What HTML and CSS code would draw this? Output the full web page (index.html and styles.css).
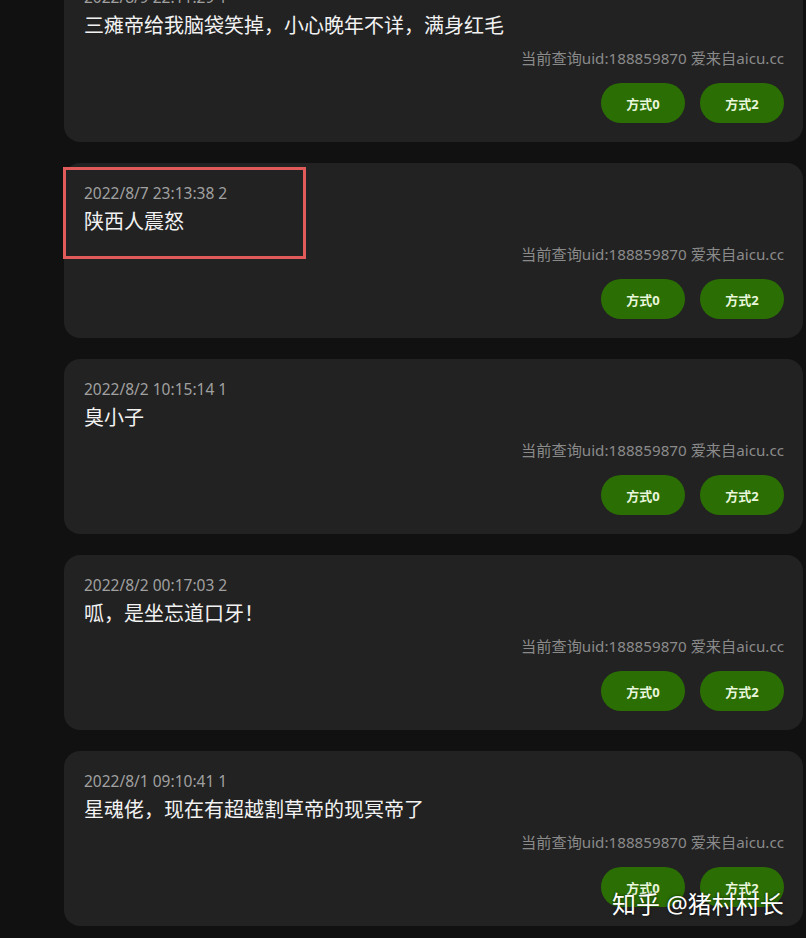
FILE: index.html
```html
<!DOCTYPE html>
<html lang="zh-CN">
<head>
    <meta charset="UTF-8">
    <meta name="viewport" content="width=device-width, initial-scale=1.0">
    <title>评论记录</title>
    <link rel="stylesheet" href="styles.css">
</head>
<body>
    <div class="list">
        <div class="card">
            <div class="date">2022/8/9 22:11:29 1</div>
            <div class="content">三瘫帝给我脑袋笑掉，小心晚年不详，满身红毛</div>
            <div class="uid">当前查询uid:188859870 爱来自aicu.cc</div>
            <div class="actions">
                <button class="btn">方式0</button>
                <button class="btn">方式2</button>
            </div>
        </div>
        <div class="card">
            <div class="mark"></div>
            <div class="date">2022/8/7 23:13:38 2</div>
            <div class="content">陕西人震怒</div>
            <div class="uid">当前查询uid:188859870 爱来自aicu.cc</div>
            <div class="actions">
                <button class="btn">方式0</button>
                <button class="btn">方式2</button>
            </div>
        </div>
        <div class="card">
            <div class="date">2022/8/2 10:15:14 1</div>
            <div class="content">臭小子</div>
            <div class="uid">当前查询uid:188859870 爱来自aicu.cc</div>
            <div class="actions">
                <button class="btn">方式0</button>
                <button class="btn">方式2</button>
            </div>
        </div>
        <div class="card">
            <div class="date">2022/8/2 00:17:03 2</div>
            <div class="content">呱，是坐忘道口牙！</div>
            <div class="uid">当前查询uid:188859870 爱来自aicu.cc</div>
            <div class="actions">
                <button class="btn">方式0</button>
                <button class="btn">方式2</button>
            </div>
        </div>
        <div class="card">
            <div class="date">2022/8/1 09:10:41 1</div>
            <div class="content">星魂佬，现在有超越割草帝的现冥帝了</div>
            <div class="uid">当前查询uid:188859870 爱来自aicu.cc</div>
            <div class="actions">
                <button class="btn">方式0</button>
                <button class="btn">方式2</button>
            </div>
        </div>
    </div>
    <div class="watermark">知乎 @猪村村长</div>
</body>
</html>
```

FILE: styles.css
```css
body {
    margin: 0;
    background-color: #111111;
    font-family: "Noto Sans", "Noto Sans CJK SC", sans-serif;
    height: 938px;
    overflow: hidden;
    position: relative;
}
.list {
    display: flex;
    flex-direction: column;
    gap: 21px;
    padding: 0 3px 0 64px;
    margin-top: -33px;
}
.card {
    position: relative;
    background: #222222;
    border-radius: 16px;
    padding: 20px 19px 20px 20px;
    height: 135px;
}
.date {
    font-size: 15.5px;
    line-height: 20px;
    color: #a0a0a0;
}
.content {
    font-size: 20px;
    line-height: 28px;
    color: #f2f2f2;
    margin-top: 5px;
}
.uid {
    font-size: 15.2px;
    line-height: 20px;
    color: #8a8a8a;
    text-align: right;
    margin-top: 8px;
}
.actions {
    display: flex;
    justify-content: flex-end;
    gap: 15px;
    margin-top: 15px;
}
.btn {
    width: 84px;
    height: 40px;
    border: none;
    border-radius: 20px;
    background: #2b6e03;
    color: #e8f6dc;
    font-family: "Noto Sans", "Noto Sans CJK SC", sans-serif;
    font-size: 13px;
    font-weight: bold;
    cursor: pointer;
}
.mark {
    position: absolute;
    left: -1px;
    top: 4px;
    width: 237px;
    height: 86px;
    border: 3px solid #e15b5b;
}
.watermark {
    position: absolute;
    left: 612px;
    top: 887px;
    font-size: 24px;
    line-height: 34px;
    color: #ffffff;
    text-shadow: 0 0 3px rgba(0, 0, 0, 0.7);
}
```
